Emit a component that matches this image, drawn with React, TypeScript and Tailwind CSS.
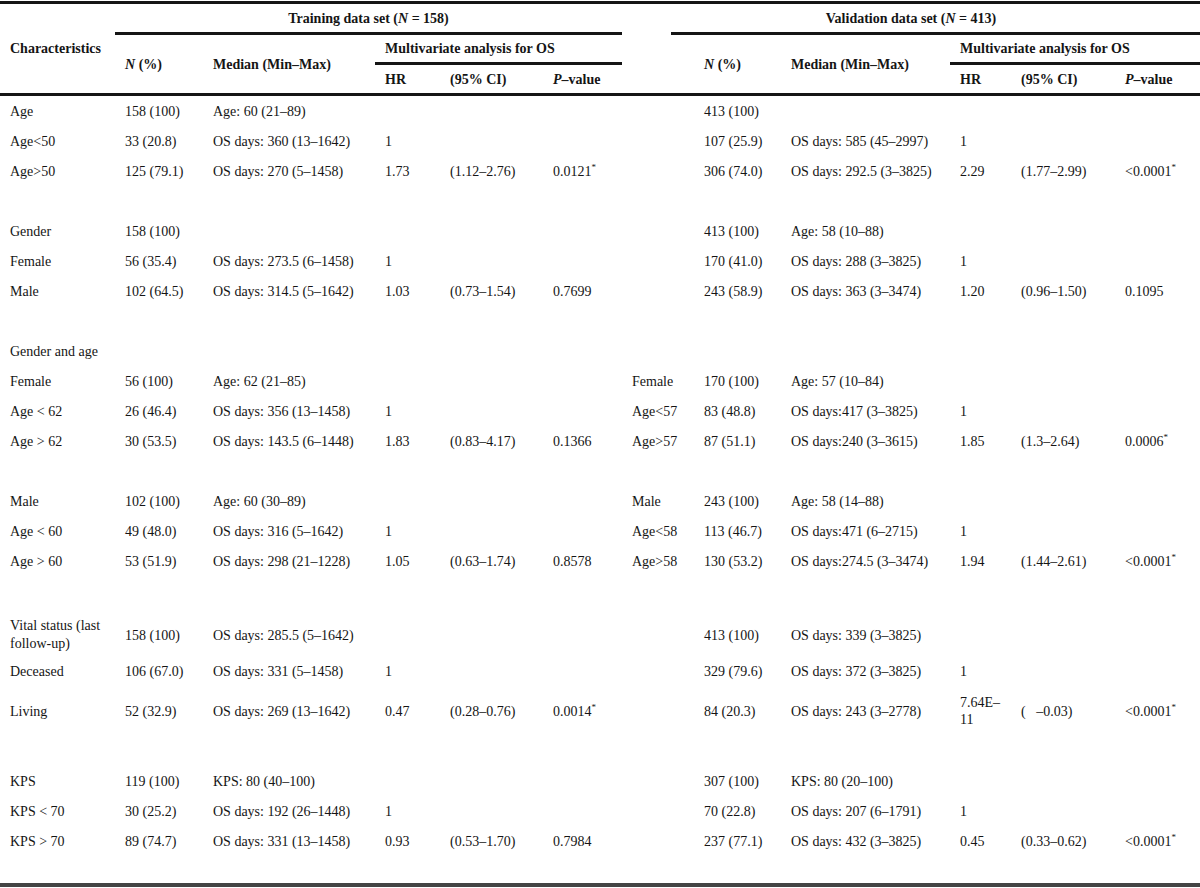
import React from "react";

const GRID =
  "grid grid-cols-[115px_88px_172px_65px_103px_79px_72px_87px_169px_61px_104px_85px]";

const Star = () => <sup className="text-[9px] top-[-0.6em]">*</sup>;

type Cell = React.ReactNode;

function Row({ cells, h = "h-[30px]", pad = "" }: { cells: Cell[]; h?: string; pad?: string }) {
  return (
    <div className={`${GRID} ${h} ${pad}`}>
      {cells.map((c, i) => (
        <div key={i} className="flex items-center pl-[10px] whitespace-nowrap leading-[17px]">
          {c}
        </div>
      ))}
    </div>
  );
}

const Blank = () => <div className="h-[30px]" />;

export default function App() {
  return (
    <div className="w-[1200px] h-[888px] bg-white text-[#151515] text-[14px] font-['Liberation_Serif','Times_New_Roman',serif] flex flex-col overflow-hidden">
      <div className="mt-[1px] h-[3px] bg-[#151515]" />
      <div className={`${GRID} grid-rows-[28px_3px_27px_3px_28px] font-bold`}>
        <div className="col-start-1 row-start-1 row-span-5 flex items-center pl-[10px]">
          Characteristics
        </div>
        <div className="col-start-2 col-span-5 row-start-1 flex items-center justify-center">
          Training data set (<i>N</i>&nbsp;=&nbsp;158)
        </div>
        <div className="col-start-2 col-span-5 row-start-2 bg-[#151515]" />
        <div className="col-start-7 col-span-6 row-start-1 flex items-center justify-center">
          Validation data set (<i>N</i>&nbsp;=&nbsp;413)
        </div>
        <div className="col-start-7 col-span-6 row-start-2 ml-[49px] bg-[#151515]" />

        <div className="col-start-2 row-start-3 row-span-3 flex items-center pl-[10px]">
          <span>
            <i>N</i> (%)
          </span>
        </div>
        <div className="col-start-3 row-start-3 row-span-3 flex items-center pl-[10px]">
          Median (Min–Max)
        </div>
        <div className="col-start-4 col-span-3 row-start-3 flex items-center pl-[10px]">
          Multivariate analysis for OS
        </div>
        <div className="col-start-4 col-span-3 row-start-4 bg-[#151515]" />
        <div className="col-start-4 row-start-5 flex items-center pl-[10px]">HR</div>
        <div className="col-start-5 row-start-5 flex items-center pl-[10px]">(95% CI)</div>
        <div className="col-start-6 row-start-5 flex items-center pl-[10px]">
          <span>
            <i>P</i>–value
          </span>
        </div>

        <div className="col-start-8 row-start-3 row-span-3 flex items-center pl-[10px]">
          <span>
            <i>N</i> (%)
          </span>
        </div>
        <div className="col-start-9 row-start-3 row-span-3 flex items-center pl-[10px]">
          Median (Min–Max)
        </div>
        <div className="col-start-10 col-span-3 row-start-3 flex items-center pl-[10px]">
          Multivariate analysis for OS
        </div>
        <div className="col-start-10 col-span-3 row-start-4 bg-[#151515]" />
        <div className="col-start-10 row-start-5 flex items-center pl-[10px]">HR</div>
        <div className="col-start-11 row-start-5 flex items-center pl-[10px]">(95% CI)</div>
        <div className="col-start-12 row-start-5 flex items-center pl-[10px]">
          <span>
            <i>P</i>–value
          </span>
        </div>
      </div>
      <div className="h-[3px] bg-[#151515]" />

      <Row cells={["Age", "158 (100)", "Age: 60 (21–89)", "", "", "", "", "413 (100)", "", "", "", ""]} />
      <Row cells={["Age<50", "33 (20.8)", "OS days: 360 (13–1642)", "1", "", "", "", "107 (25.9)", "OS days: 585 (45–2997)", "1", "", ""]} />
      <Row
        cells={[
          "Age>50", "125 (79.1)", "OS days: 270 (5–1458)", "1.73", "(1.12–2.76)", <span>0.0121<Star /></span>,
          "", "306 (74.0)", "OS days: 292.5 (3–3825)", "2.29", "(1.77–2.99)", <span>&lt;0.0001<Star /></span>,
        ]}
      />
      <Blank />
      <Row cells={["Gender", "158 (100)", "", "", "", "", "", "413 (100)", "Age: 58 (10–88)", "", "", ""]} />
      <Row cells={["Female", "56 (35.4)", "OS days: 273.5 (6–1458)", "1", "", "", "", "170 (41.0)", "OS days: 288 (3–3825)", "1", "", ""]} />
      <Row cells={["Male", "102 (64.5)", "OS days: 314.5 (5–1642)", "1.03", "(0.73–1.54)", "0.7699", "", "243 (58.9)", "OS days: 363 (3–3474)", "1.20", "(0.96–1.50)", "0.1095"]} />
      <Blank />
      <Row cells={["Gender and age", "", "", "", "", "", "", "", "", "", "", ""]} />
      <Row cells={["Female", "56 (100)", "Age: 62 (21–85)", "", "", "", "Female", "170 (100)", "Age: 57 (10–84)", "", "", ""]} />
      <Row cells={["Age < 62", "26 (46.4)", "OS days: 356 (13–1458)", "1", "", "", "Age<57", "83 (48.8)", "OS days:417 (3–3825)", "1", "", ""]} />
      <Row
        cells={[
          "Age > 62", "30 (53.5)", "OS days: 143.5 (6–1448)", "1.83", "(0.83–4.17)", "0.1366",
          "Age>57", "87 (51.1)", "OS days:240 (3–3615)", "1.85", "(1.3–2.64)", <span>0.0006<Star /></span>,
        ]}
      />
      <Blank />
      <Row cells={["Male", "102 (100)", "Age: 60 (30–89)", "", "", "", "Male", "243 (100)", "Age: 58 (14–88)", "", "", ""]} />
      <Row cells={["Age < 60", "49 (48.0)", "OS days: 316 (5–1642)", "1", "", "", "Age<58", "113 (46.7)", "OS days:471 (6–2715)", "1", "", ""]} />
      <Row
        cells={[
          "Age > 60", "53 (51.9)", "OS days: 298 (21–1228)", "1.05", "(0.63–1.74)", "0.8578",
          "Age>58", "130 (53.2)", "OS days:274.5 (3–3474)", "1.94", "(1.44–2.61)", <span>&lt;0.0001<Star /></span>,
        ]}
      />
      <Blank />
      <Row
        h="h-[50px]"
        pad="pt-[8px]"
        cells={[
          <span className="leading-[18px]">Vital status (last<br />follow-up)</span>,
          "158 (100)", "OS days: 285.5 (5–1642)", "", "", "", "", "413 (100)", "OS days: 339 (3–3825)", "", "", "",
        ]}
      />
      <Row cells={["Deceased", "106 (67.0)", "OS days: 331 (5–1458)", "1", "", "", "", "329 (79.6)", "OS days: 372 (3–3825)", "1", "", ""]} />
      <Row
        h="h-[50px]"
        cells={[
          "Living", "52 (32.9)", "OS days: 269 (13–1642)", "0.47", "(0.28–0.76)", <span>0.0014<Star /></span>,
          "", "84 (20.3)", "OS days: 243 (3–2778)", <span>7.64E–<br />11</span>, <span className="whitespace-pre">(   –0.03)</span>, <span>&lt;0.0001<Star /></span>,
        ]}
      />
      <Blank />
      <Row cells={["KPS", "119 (100)", "KPS: 80 (40–100)", "", "", "", "", "307 (100)", "KPS: 80 (20–100)", "", "", ""]} />
      <Row cells={["KPS < 70", "30 (25.2)", "OS days: 192 (26–1448)", "1", "", "", "", "70 (22.8)", "OS days: 207 (6–1791)", "1", "", ""]} />
      <Row
        cells={[
          "KPS > 70", "89 (74.7)", "OS days: 331 (13–1458)", "0.93", "(0.53–1.70)", "0.7984",
          "", "237 (77.1)", "OS days: 432 (3–3825)", "0.45", "(0.33–0.62)", <span>&lt;0.0001<Star /></span>,
        ]}
      />
      <div className="h-[27px]" />
      <div className="h-[4px] bg-[#444]" />
    </div>
  );
}
